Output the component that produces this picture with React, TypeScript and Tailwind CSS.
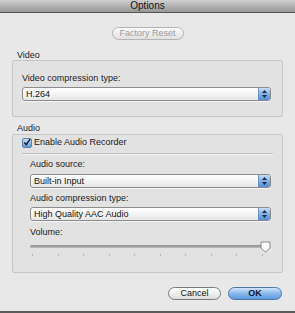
import React from 'react';

const font = { fontFamily: '"Liberation Sans", Arial, sans-serif' };

// aqua-style popup menu
function PopUp({ value }: { value: string }) {
  return (
    <div className="flex h-[14px] items-stretch rounded-[3px] border border-[#8c8c8c] bg-gradient-to-b from-[#ffffff] via-[#f4f4f4] to-[#e6e6e6] shadow-[0_1px_0_rgba(255,255,255,0.6)]">
      <div className="flex flex-1 items-center pl-[3px] text-[9px] leading-none text-[#111]">{value}</div>
      <div className="flex w-[12px] flex-col items-center justify-center gap-[2px] rounded-r-[2px] border-l border-[#6f8fb8] bg-gradient-to-b from-[#c9def6] via-[#7fb1e8] to-[#4f8fd6]">
        <svg width="5" height="3" viewBox="0 0 5 3">
          <path d="M0 3 L2.5 0 L5 3 Z" fill="#1b2a3d" />
        </svg>
        <svg width="5" height="3" viewBox="0 0 5 3">
          <path d="M0 0 L2.5 3 L5 0 Z" fill="#1b2a3d" />
        </svg>
      </div>
    </div>
  );
}

export default function App() {
  const ticks = Array.from({ length: 10 });

  return (
    <div
      className="flex h-[313px] w-[295px] flex-col overflow-hidden bg-[#e8e8e8] text-[9px] text-[#1a1a1a]"
      style={font}
    >
      {/* Title bar */}
      <div className="flex h-[13px] shrink-0 items-center justify-center border-b border-[#555] bg-gradient-to-b from-[#d0d0d0] to-[#979797] text-[10px] leading-none text-[#111]">
        Options
      </div>

      {/* Factory reset (disabled) */}
      <div className="mt-[14px] flex justify-center">
        <div className="flex h-[13px] w-[72px] items-center justify-center rounded-full border border-[#b4b4b4] bg-gradient-to-b from-[#fafafa] to-[#e2e2e2] text-[9px] leading-none text-[#9a9a9a]">
          Factory Reset
        </div>
      </div>

      {/* Video */}
      <div className="mt-[10px] h-[10px] pl-[17px] leading-[10px]">Video</div>
      <div className="mx-[12px] mt-0 flex h-[57px] flex-col rounded-[2px] border border-[#c6c6c6] bg-[#e2e2e2] pl-[9px] pr-[11px] pt-[12px]">
        <div className="h-[10px] leading-[10px]">Video compression type:</div>
        <div className="mt-[4px]">
          <PopUp value="H.264" />
        </div>
      </div>

      {/* Audio */}
      <div className="mt-[6px] h-[10px] pl-[17px] leading-[10px]">Audio</div>
      <div className="mx-[12px] mt-[1px] flex h-[139px] flex-col rounded-[2px] border border-[#c6c6c6] bg-[#e2e2e2] pl-[9px] pr-[9px] pt-[2px]">
        <div className="flex h-[11px] items-center gap-[2px]">
          <div className="flex h-[10px] w-[10px] items-center justify-center rounded-[2px] border border-[#5e7fa8] bg-gradient-to-b from-[#c6dcf5] to-[#5d98da]">
            <svg width="9" height="9" viewBox="0 0 9 9">
              <path d="M1.5 4.5 L3.7 7 L8 0.8" fill="none" stroke="#0f1a2b" strokeWidth="1.6" />
            </svg>
          </div>
          <span className="leading-none">Enable Audio Recorder</span>
        </div>
        <div className="mt-[5px] h-px bg-[#bdbdbd] shadow-[0_1px_0_#f2f2f2]" />

        <div className="flex flex-col pl-[8px] pr-[2px]">
          <div className="mt-[5px] h-[10px] leading-[10px]">Audio source:</div>
          <div className="mt-[5px]">
            <PopUp value="Built-in Input" />
          </div>
          <div className="mt-[5px] h-[10px] leading-[10px]">Audio compression type:</div>
          <div className="mt-[4px]">
            <PopUp value="High Quality AAC Audio" />
          </div>
          <div className="mt-[6px] h-[10px] leading-[10px]">Volume:</div>

          {/* Volume slider */}
          <div className="relative mt-[3px] h-[20px]">
            <div className="absolute left-0 right-[6px] top-[5px] h-[3px] rounded-full bg-gradient-to-b from-[#8d8d8d] to-[#bdbdbd]" />
            <div className="absolute left-[2px] right-[8px] top-[14px] flex justify-between">
              {ticks.map((_, i) => (
                <div key={i} className="h-[2px] w-px bg-[#b8b8b8]" />
              ))}
            </div>
            <svg className="absolute right-0 top-[1px]" width="11" height="12" viewBox="0 0 11 12">
              <path d="M1 1 H10 V7 L5.5 11 L1 7 Z" fill="#fbfbfb" stroke="#8a8a8a" strokeWidth="1" />
            </svg>
          </div>
        </div>
      </div>

      {/* Buttons */}
      <div className="mt-[14px] flex justify-end gap-[7px] pr-[13px]">
        <div className="flex h-[13px] w-[53px] items-center justify-center rounded-full border border-[#7c7c7c] bg-gradient-to-b from-[#ffffff] via-[#f0f0f0] to-[#dcdcdc] leading-none text-[#111]">
          Cancel
        </div>
        <div className="flex h-[13px] w-[54px] items-center justify-center rounded-full border border-[#4f74a8] bg-gradient-to-b from-[#d2e5fa] via-[#88b9ec] to-[#5d9be0] font-bold leading-none text-[#0d1a2c]">
          OK
        </div>
      </div>

      <div className="flex-1" />
      <div className="h-[2px] bg-[#5a5a5a]" />
    </div>
  );
}
